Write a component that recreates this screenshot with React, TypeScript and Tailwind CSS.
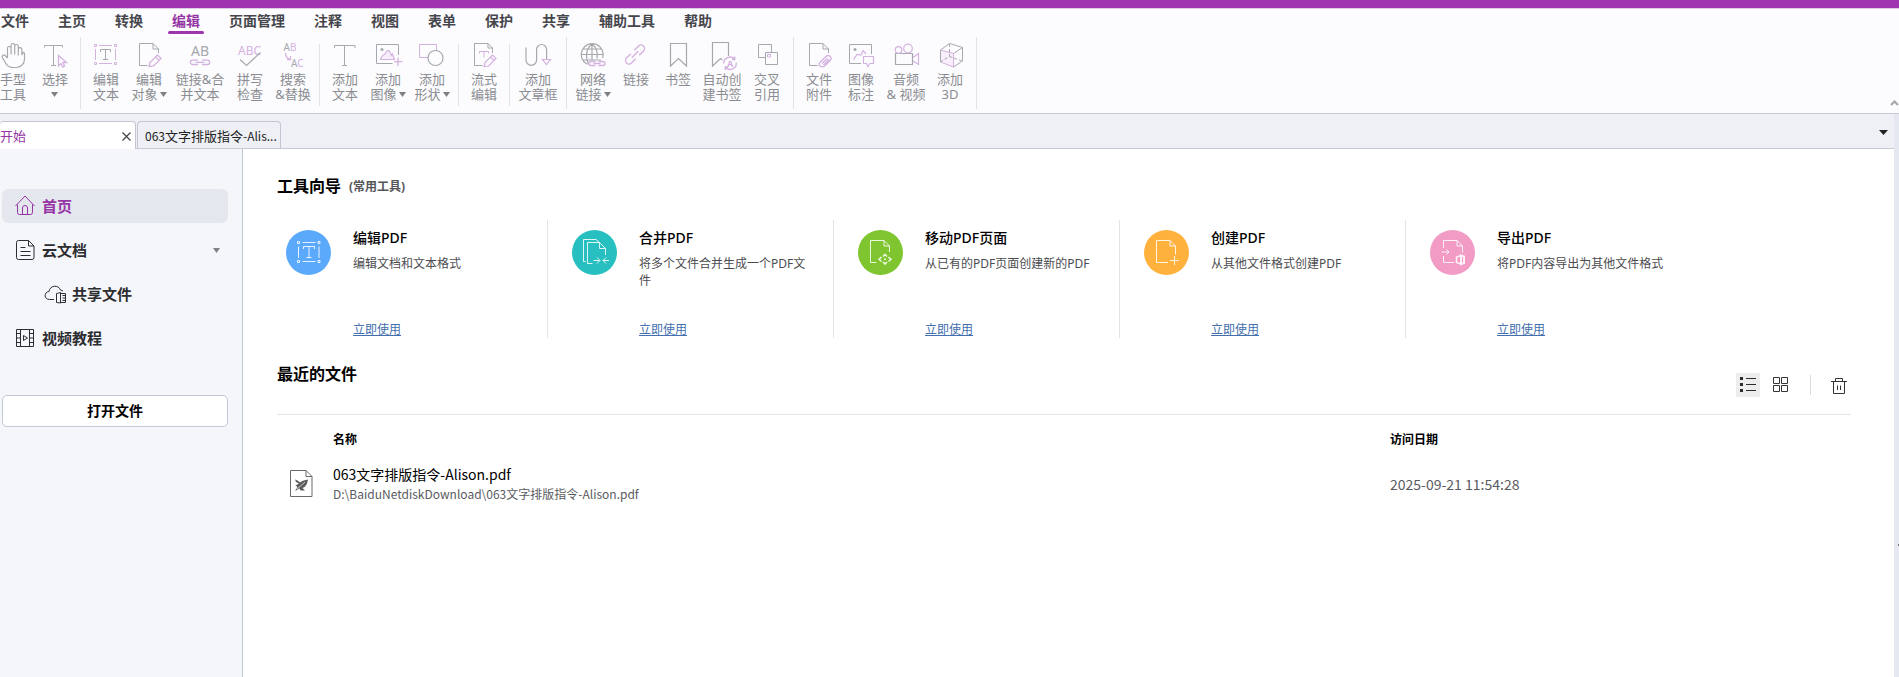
import { useState, type ReactNode } from 'react'

const G = '#a6a8ad'
const P = '#d4b2df'

const MENUS = ['文件', '主页', '转换', '编辑', '页面管理', '注释', '视图', '表单', '保护', '共享', '辅助工具', '帮助']

const PAGE = 'M12.5 24.5H4.500V2.500H18L23.500 8V12'
const PENCIL = 'M14 25.500L15 21.500L22.500 14L26 17.500L18.500 25L14 25.500ZM20.500 16L24 19.500'

function Ico({ children }: { children: ReactNode }) {
  return (
    <svg width="28" height="28" viewBox="0 0 28 28" fill="none" stroke={G} className="shrink-0 overflow-visible" aria-hidden="true">
      {children}
    </svg>
  )
}

const ICONS: Record<string, ReactNode> = {
  hand: (
    <path strokeWidth="1.2" d="M8.500 17V7.300a1.800 1.800 0 0 1 3.600 0V13.500M12.100 13.500V4.300a1.800 1.800 0 0 1 3.600 0V13.500M15.700 13.500V5.300a1.800 1.800 0 0 1 3.600 0V14M19.300 14.500V8.500a1.800 1.800 0 0 1 3.600 0V14L24 11.500a1.300 1.300 0 0 1 1.500 1V18C25.500 23.500 21.500 26.500 17 26.500H13.500C9 26.500 7.500 24 6 21L3.300 16.500C2.500 14.500 4.800 13 6.200 14.500L8.500 17" />
  ),
  select: (
    <>
      <path d="M3.500 6.500V4.500H21.500V6.500M12.500 4.500V24.500M10 24.500H15" />
      <path stroke={P} strokeWidth="1.3" d="M17.500 14.500V25L20 22.500L21.800 26L23.500 25L22 21.500H25.500Z" />
    </>
  ),
  editText: (
    <>
      <path stroke={P} d="M2.500 3.500h2v2h-2zM22.500 3.500h2v2h-2zM2.500 21.500h2v2h-2zM22.500 21.500h2v2h-2zM7 4.500H20M7 22.500H20M3.500 8V19M23.500 8V19" />
      <path d="M8.500 11V8.500H18.500V11M13.500 8.500V18.500M11 18.500H16" />
    </>
  ),
  editObject: (
    <>
      <path d="M12.500 24.500H4.500V2.500H18L23.500 8V12M18 2.500V8H23.500" />
      <path stroke={P} strokeWidth="1.3" d={PENCIL} />
    </>
  ),
  linkText: (
    <>
      <text x="14" y="15" textAnchor="middle" fontSize="14" fill={G} stroke="none">AB</text>
      <path stroke={P} strokeWidth="1.3" d="M12 23.500H6.500a2.200 2.200 0 0 1 0-4.400H12M16 19.100H21.500a2.200 2.200 0 0 1 0 4.400H16M9.500 21.300H18.500" />
    </>
  ),
  spell: (
    <>
      <text x="13.500" y="13.500" textAnchor="middle" fontSize="12" fill={P} stroke="none">ABC</text>
      <path strokeWidth="1.200" d="M4 18.500L10.500 24.500L24.500 11.500" />
    </>
  ),
  replace: (
    <>
      <text x="4.500" y="10" fontSize="10" fill={G} stroke="none">A<tspan fill={P}>B</tspan></text>
      <text x="12" y="25.500" fontSize="10" fill={G} stroke="none">A<tspan fill={P}>C</tspan></text>
      <path stroke={P} strokeWidth="1.200" d="M6.500 12C6.500 15.500 8 17.500 11.500 18.500M11.500 15V18.700H8" />
    </>
  ),
  addText: <path d="M3.500 7V4.500H24V7M13.500 4.500V24.500M11 24.500H16" />,
  addImage: (
    <>
      <path d="M18.500 22.500H2.500V3.500H24.500V14" />
      <circle cx="8" cy="8.500" r="1.500" fill={G} stroke="none" />
      <path stroke={P} fill="#f7eefb" strokeWidth="1.200" d="M6.500 18.500C8 15 9 13.500 10.500 13.500L13.500 9.500H15L17.500 14.500L18.500 13L20.500 18.500Z" />
      <path stroke={P} strokeWidth="1.300" d="M24 16.500V25M20 20.700H28.500" />
    </>
  ),
  addShape: (
    <>
      <path stroke={P} d="M1.500 3.500H18.500V16.500H1.500Z" />
      <circle cx="17.500" cy="17" r="7.500" fill="#fcfcfe" strokeWidth="1.200" />
    </>
  ),
  flow: (
    <>
      <path d="M12.500 24.500H4.500V2.500H18L22.500 7V12M18 2.500V7H22.500" />
      <path stroke={P} d="M9.500 12.500V10.500H18.500V12.500M14 10.500V16.500" />
      <path stroke={P} strokeWidth="1.200" d={PENCIL} />
    </>
  ),
  articleBox: (
    <>
      <path strokeWidth="1.200" d="M2 6.500V19a5.300 5.300 0 0 0 10.600 0V8.500a5 5 0 0 1 10 0V18" />
      <path stroke={P} strokeWidth="1.200" d="M18.500 18.500H26.500L22.500 23.500Z" />
    </>
  ),
  web: (
    <>
      <path strokeWidth="1.200" d="M8 23.300A11 11 0 1 1 23.700 17M13 2.700V19M2 13.500H24M4 8H22M4 19H22M9.500 23.500C6.500 16 7 8 13 2.700C19 8 18.500 13 18 17.500" />
      <path stroke={P} strokeWidth="1.300" fill="#fcfcfe" d="M16.500 24.500H12a2 2 0 0 1 0-4H16.500M19.500 20.500H24a2 2 0 0 1 0 4H19.500M14.500 22.500H21.500" />
    </>
  ),
  link: (
    <g stroke={P} strokeWidth="1.400" transform="rotate(-45 13 13.500)">
      <path d="M10.500 17H4.500a3.500 3.500 0 0 1 0-7H10.500M15.500 10H21.500a3.500 3.500 0 0 1 0 7H15.500M8.500 13.500H17.500" />
    </g>
  ),
  bookmark: <path strokeWidth="1.200" d="M6.500 2.500H22.500V25L14.500 17.500L6.500 25Z" />,
  autoBookmark: (
    <>
      <path strokeWidth="1.200" d="M20.500 15V1.500H4.500V25L12.500 17.500L14.500 19" />
      <path stroke={P} strokeWidth="1.300" d="M26.500 18A6.300 6.300 0 0 0 15.700 22.500M17.500 26.500A6.300 6.300 0 0 0 28.300 21.500M26.700 15.500V18.500H24M17.300 29V26H20" />
      <text x="22" y="25.500" textAnchor="middle" fontSize="9" fontWeight="700" fill={P} stroke="none">A</text>
    </>
  ),
  cross: (
    <>
      <path d="M12 16.500H5.500V3.500H18.500V11M12.500 11.500H24.500V23.500H12.500Z" />
      <path stroke={P} d="M14.500 13.500H17.500V16H14.500Z" />
    </>
  ),
  attach: (
    <>
      <path d={PAGE} />
      <path d="M18 2.500V8H23.500" />
      <path stroke={P} strokeWidth="1.300" d="M14.800 21.500L21 15.500C24 13 27.800 16.500 25 19.500L20 24.700C17.500 27 12 25.500 14.800 21.500M17 22.500L22.500 17.300M18.500 24L24 18.500" />
    </>
  ),
  imageNote: (
    <>
      <path d="M14 22.500H2.500V3.500H24.500V13" />
      <circle cx="8" cy="8.500" r="1.500" fill={G} stroke="none" />
      <path stroke={P} strokeWidth="1.200" d="M6.500 18.500L10 13.500L14 14L16 9.500L19 13M16.500 15.500H26.500V22.500H23L21 25.500L19.500 22.500H16.500Z" />
    </>
  ),
  video: (
    <>
      <path strokeWidth="1.200" d="M3.500 12.500H20.500V23.500H3.500Z" />
      <g stroke={P} strokeWidth="1.200">
        <circle cx="6.500" cy="9" r="3.300" />
        <circle cx="16" cy="7.500" r="4.300" />
        <path d="M21 16.500L26.500 12.500V23.500L21 20" />
      </g>
    </>
  ),
  cube: (
    <>
      <path stroke={P} fill="#f9effc" d="M4.500 9L17.500 12.500V26L4.500 21Z" />
      <path d="M4.500 9L13.500 2.500L26.500 6.500V20L17.500 26M4.500 9V21M17.500 12.500L26.500 6.500" />
      <path strokeDasharray="3 2" d="M13.500 3V15.500L5 20.500M13.500 15.500L26 20" />
    </>
  ),
}

type Tool = { icon: string; lines: string[]; w: string; drop?: boolean }

const GROUPS: { tools: Tool[]; tall: boolean }[] = [
  {
    tall: true,
    tools: [
      { icon: 'hand', lines: ['手型', '工具'], w: 'w-[26px] mr-1' },
      { icon: 'select', lines: ['选择', ''], w: 'w-[50px]', drop: true },
    ],
  },
  {
    tall: false,
    tools: [
      { icon: 'editText', lines: ['编辑', '文本'], w: 'w-[50px]' },
      { icon: 'editObject', lines: ['编辑', '对象'], w: 'w-[36px]', drop: true },
      { icon: 'linkText', lines: ['链接&合', '并文本'], w: 'w-[66px]' },
      { icon: 'spell', lines: ['拼写', '检查'], w: 'w-[34px]' },
      { icon: 'replace', lines: ['搜索', '&替换'], w: 'w-[52px]' },
    ],
  },
  {
    tall: false,
    tools: [
      { icon: 'addText', lines: ['添加', '文本'], w: 'w-[50px]' },
      { icon: 'addImage', lines: ['添加', '图像'], w: 'w-[36px]', drop: true },
      { icon: 'addShape', lines: ['添加', '形状'], w: 'w-[52px]', drop: true },
    ],
  },
  { tall: false, tools: [{ icon: 'flow', lines: ['流式', '编辑'], w: 'w-[50px]' }] },
  { tall: true, tools: [{ icon: 'articleBox', lines: ['添加', '文章框'], w: 'w-[56px]' }] },
  {
    tall: true,
    tools: [
      { icon: 'web', lines: ['网络', '链接'], w: 'w-[52px]', drop: true },
      { icon: 'link', lines: ['链接'], w: 'w-[34px]' },
      { icon: 'bookmark', lines: ['书签'], w: 'w-[50px]' },
      { icon: 'autoBookmark', lines: ['自动创', '建书签'], w: 'w-[38px]' },
      { icon: 'cross', lines: ['交叉', '引用'], w: 'w-[52px]' },
    ],
  },
  {
    tall: true,
    tools: [
      { icon: 'attach', lines: ['文件', '附件'], w: 'w-[50px]' },
      { icon: 'imageNote', lines: ['图像', '标注'], w: 'w-[34px]' },
      { icon: 'video', lines: ['音频', '& 视频'], w: 'w-[56px]' },
      { icon: 'cube', lines: ['添加', '3D'], w: 'w-[32px] mr-[10px]' },
    ],
  },
]

const CARDS = [
  {
    title: '编辑PDF',
    desc: '编辑文档和文本格式',
    bg: 'bg-[#5ba9fb]',
    art: (
      <path d="M11.500 11.500h2v2h-2zM32 11.500h2v2h-2zM11.500 30.500h2v2h-2zM32 30.500h2v2h-2zM16.500 12.500H29.500M16.500 31.500H29.500M12.500 16.500V28M33 16.500V28M17.500 19V16.500H28.500V19M23 16.500V27.500M20.500 27.500H25.500" />
    ),
  },
  {
    title: '合并PDF',
    desc: '将多个文件合并生成一个PDF文件',
    bg: 'bg-[#27bfc0]',
    art: (
      <path d="M13.500 31.500H11.500V9.500H24L27 12M20.500 33.500H15.500V12.500H27.500L33.500 18.500V25M27.500 12.500V18.500H33.500M21.500 30.500H27.500M25 27.500L28 30.500L25 33.500M31 30.500H37M34 27.500L31 30.500L34 33.500" />
    ),
  },
  {
    title: '移动PDF页面',
    desc: '从已有的PDF页面创建新的PDF',
    bg: 'bg-[#7ec52f]',
    art: (
      <>
        <path d="M18.500 32.500H12.500V10.500H26L31.500 16V22M26 10.500V16H31.500" />
        <path strokeWidth="1.600" d="M25 26.500L27 24.500L29 26.500M25 32L27 34L29 32M23.500 27L21 29.300L23.500 31.500M30.500 27L33 29.300L30.500 31.500M26 29.300H28" />
      </>
    ),
  },
  {
    title: '创建PDF',
    desc: '从其他文件格式创建PDF',
    bg: 'bg-[#ffb13e]',
    art: <path d="M24 32.500H12.500V10.500H26L31.500 16V24.500M26 10.500V16H31.500M30.500 26V35M26 30.500H35" />,
  },
  {
    title: '导出PDF',
    desc: '将PDF内容导出为其他文件格式',
    bg: 'bg-[#f19bc5]',
    art: (
      <>
        <path d="M13.500 18V10.500H27L32.500 16V22.500M27 10.500V16H32.500M13.500 26V32.500H24M11.500 22H19M16.500 19.500L19 22L16.500 24.500" />
        <path strokeWidth="1.600" d="M31 25.500L26.500 27V32.500L31 34" />
        <path strokeWidth="2" d="M31 25.500L34 26.500V33L31 34Z" />
      </>
    ),
  },
]

const NAV = [
  {
    label: '首页',
    art: <path d="M2.500 12L12 2L21.500 12M4.500 10.500V18.500a2 2 0 0 0 2 2H17.500a2 2 0 0 0 2-2V10.500M9.500 20.500V14a2.500 2.500 0 0 1 5 0V20.500" />,
  },
  {
    label: '云文档',
    expandable: true,
    art: <path d="M5.500 2.500H15.500L21 8V19.500a2 2 0 0 1-2 2H5.500a2 2 0 0 1-2-2V4.500a2 2 0 0 1 2-2ZM15.500 2.500V8H21M7.500 9.500H12.500M7.500 13.500H17.500M7.500 17.500H17.500" />,
  },
  {
    label: '共享文件',
    nested: true,
    art: <path d="M11 17.500H6.500C0 17 1.500 9.500 6 9.500C7 3 15.500 2.500 17.500 8L20 9M13.500 11.500L17.500 10.500V21L13.500 20.500ZM17.500 11.500H22.500V20.500H17.500M19.500 13.500H22.500M19.500 16H22.500M19.500 18.500H22.500" />,
  },
  {
    label: '视频教程',
    art: <path d="M3.500 3.500H20.500V20.500H3.500ZM7.500 3.500V20.500M16.500 3.500V20.500M3.500 7.500H7.500M3.500 12H7.500M3.500 16.500H7.500M16.500 7.500H20.500M16.500 12H20.500M16.500 16.500H20.500M10.500 9.500V14.500L14.500 12Z" />,
  },
]

function Caret() {
  return (
    <svg width="7" height="5" viewBox="0 0 7 5" fill="#7f8085" aria-hidden="true">
      <path d="M0 0H7L3.500 5Z" />
    </svg>
  )
}

function ToolButton({ tool }: { tool: Tool }) {
  return (
    <button className={`flex shrink-0 flex-col items-center pt-1 text-[13px] leading-[15px] whitespace-nowrap text-[#8b8c91] ${tool.w}`}>
      <Ico>{ICONS[tool.icon]}</Ico>
      <span className="mt-[3px] flex flex-col items-center">
        {tool.lines.map((line, i) => (
          <span key={i} className="flex h-[15px] items-center gap-0.5">
            {line}
            {tool.drop && i === tool.lines.length - 1 && <Caret />}
          </span>
        ))}
      </span>
    </button>
  )
}

export default function App() {
  const [menu, setMenu] = useState('编辑')
  const [nav, setNav] = useState('首页')
  const [view, setView] = useState('list')

  return (
    <div className="flex min-h-screen flex-col overflow-x-hidden bg-white font-['Noto_Sans','Noto_Sans_CJK_SC',sans-serif] text-black">
      <header className="border-b border-[#c8cad3] bg-[#fcfcfe]">
        <div className="h-2 bg-[#a034b0]" />
        <nav className="flex h-[29px] gap-[29px] border-t border-[#dccbe4] pl-px">
          {MENUS.map(m => (
            <button
              key={m}
              onClick={() => setMenu(m)}
              className={`relative h-6 text-sm font-bold whitespace-nowrap ${menu === m ? 'text-[#9535a5]' : 'text-[#45464b]'}`}
            >
              {m}
              {menu === m && <span className="absolute -right-1 -bottom-px -left-1 h-[3px] rounded-full bg-[#9b37ab]" />}
            </button>
          ))}
        </nav>

        {/* Ribbon */}
        <div className="flex h-[76px]">
          {GROUPS.map((g, i) => (
            <div key={i} className="flex">
              {g.tools.map(t => <ToolButton key={t.icon} tool={t} />)}
              <span className={`w-px bg-[#e2e2ea] ${g.tall ? 'h-[72px]' : 'mt-[7px] h-[62px]'}`} />
            </div>
          ))}
          <button aria-label="收起功能区" className="ml-auto self-end pb-1.5">
            <svg width="9" height="8" viewBox="0 0 9 8" fill="none" stroke="#a5a5a8" strokeWidth="2">
              <path d="M1 6L4.500 2.500L8 6" />
            </svg>
          </button>
        </div>
      </header>

      <div className="flex flex-1">
        <div className="flex min-w-0 flex-1 flex-col">
          {/* Document tabs */}
          <div className="flex h-[35px] items-end gap-px border-b border-[#c8cad3] bg-[#eff0f5] text-[13px]">
            <div className="-mb-px flex h-7 w-[136px] items-center justify-between rounded-t border border-b-0 border-l-0 border-[#c3c6d2] bg-white pt-0.5 pr-1">
              <button className="text-[#9535a5]">开始</button>
              <button aria-label="关闭">
                <svg width="9" height="9" viewBox="0 0 9 9" stroke="#444" strokeWidth="1.200">
                  <path d="M.5.5L8.500 8.500M8.500.5L.5 8.500" />
                </svg>
              </button>
            </div>
            <button className="h-[27px] w-36 rounded-t border border-b-0 border-[#c3c6d2] px-[7px] pt-0.5 text-left font-['Noto_Sans_CJK_SC',sans-serif] whitespace-nowrap text-[#222]">
              <span className="text-xs">063</span>文字排版指令<span className="text-xs">-Alis...</span>
            </button>
            <button aria-label="标签列表" className="mr-1.5 mb-[13px] ml-auto">
              <svg width="9" height="5" viewBox="0 0 9 5" fill="#222">
                <path d="M0 0H9L4.500 5Z" />
              </svg>
            </button>
          </div>

          <div className="flex flex-1">
            <aside className="w-[243px] shrink-0 border-r border-[#c3c7d6] bg-[#f5f6fa] pt-10 pr-3.5 pl-0.5">
              <nav className="flex flex-col gap-2.5">
                {NAV.map(n => (
                  <button
                    key={n.label}
                    onClick={() => setNav(n.label)}
                    className={`flex h-[34px] items-center gap-[5px] rounded-md pr-2 text-[15px] font-bold ${n.nested ? 'pl-[41px]' : 'pl-[11px]'} ${
                      nav === n.label ? 'bg-[#e5e7ef] text-[#9535a5]' : 'text-[#2c2d31]'
                    }`}
                  >
                    <svg width="24" height="24" viewBox="0 0 24 24" fill="none" stroke="currentColor" aria-hidden="true">
                      {n.art}
                    </svg>
                    {n.label}
                    {n.expandable && <span className="ml-auto"><Caret /></span>}
                  </button>
                ))}
              </nav>
              <button className="mt-10 h-8 w-full rounded-[5px] border border-[#c3c7d6] bg-white text-sm font-bold">打开文件</button>
            </aside>

            <main className="min-w-0 flex-1 pt-[25px] pr-[43px] pl-[34px]">
              <h2 className="flex items-end gap-2 text-base leading-6 font-bold">
                工具向导 <span className="text-xs leading-[22px] text-[#55565a]">(常用工具)</span>
              </h2>

              <div className="mt-[22px] -ml-[15px] grid max-w-[1430px] grid-cols-5">
                {CARDS.map(c => (
                  <section key={c.title} className="flex h-[118px] gap-[22px] border-r border-[#e3e4e8] pr-5 pl-6 last:border-r-0">
                    <span className={`mt-[10px] flex size-[45px] shrink-0 rounded-full ${c.bg}`}>
                      <svg width="45" height="45" viewBox="0 0 45 45" fill="none" stroke="#fff" strokeOpacity=".85" aria-hidden="true">
                        {c.art}
                      </svg>
                    </span>
                    <div className="flex min-w-0 flex-1 flex-col items-start pt-2">
                      <h3 className="text-sm leading-5 font-medium">{c.title}</h3>
                      <p className="mt-[7px] text-xs leading-[17px] text-[#4c4c50]">{c.desc}</p>
                      <a href="#" className="mt-auto text-xs leading-4 text-[#436fae] underline">立即使用</a>
                    </div>
                  </section>
                ))}
              </div>

              {/* Recent files */}
              <div className="mt-6 flex h-[52px] justify-between">
                <h2 className="text-base leading-6 font-bold">最近的文件</h2>
                <div className="mt-[11px] flex h-6 items-center">
                  <button aria-label="列表视图" onClick={() => setView('list')} className={`flex size-6 items-center justify-center ${view === 'list' ? 'bg-[#ededed]' : ''}`}>
                    <svg width="16" height="16" viewBox="0 0 16 16" fill="#2c2c2c">
                      <path d="M0 0h3v3H0zM0 6h3v3H0zM0 12h3v3H0zM6 1h10v1H6zM6 7h10v1H6zM6 13h10v1H6z" />
                    </svg>
                  </button>
                  <button aria-label="网格视图" onClick={() => setView('grid')} className={`ml-[9px] flex size-6 items-center justify-center ${view === 'grid' ? 'bg-[#ededed]' : ''}`}>
                    <svg width="16" height="16" viewBox="0 0 16 16" fill="none" stroke="#333">
                      <path d="M.5.5h6v6h-6zM8.500.5h6v6h-6zM.5 8.500h6v6h-6zM8.500 8.500h6v6h-6z" />
                    </svg>
                  </button>
                  <span className="ml-[17px] h-5 w-px bg-[#dcdcdc]" />
                  <button aria-label="清空" className="mr-1 ml-5">
                    <svg width="16" height="17" viewBox="0 0 16 17" fill="none" stroke="#333">
                      <path d="M0 4.500H16M4.500 4V1.500H11.500V4M2.500 4.500V16.500H13.500V4.500M6.500 8.500V13M9.500 8.500V13" />
                    </svg>
                  </button>
                </div>
              </div>

              <table className="w-full table-fixed border-t border-[#e6e6e8] text-left font-['Noto_Sans_CJK_SC',sans-serif]">
                <thead>
                  <tr className="h-[49px] text-xs">
                    <th className="w-14" aria-label="类型" />
                    <th className="font-bold">名称</th>
                    <th className="w-[461px] font-bold">访问日期</th>
                  </tr>
                </thead>
                <tbody>
                  <tr className="h-9">
                    <td className="pl-[13px]">
                      <svg width="23" height="27" viewBox="0 0 23 27" fill="none" stroke="#6a6a6c" aria-hidden="true">
                        <path d="M.5.500H16L22 6.500V26.500H.5ZM16 .5V6.500H22" />
                        <path fill="#5c5c5e" stroke="none" d="M5 9.500C8 10.500 9 11.500 10 12.500C12.500 10.500 15 10 18 9.500C17.500 14 15.500 17 12.500 18L15 20.500H10.500L9.500 18.500L5 21L7.500 17L5.500 15.500L9 13.500L6 12Z" />
                        <path stroke="#fff" strokeWidth=".7" d="M7 19L15 12" />
                      </svg>
                    </td>
                    <td>
                      <p className="text-sm leading-5">063文字排版指令-Alison.pdf</p>
                      <p className="text-xs leading-5 text-[#5a5b5f]">D:\BaiduNetdiskDownload\063文字排版指令-Alison.pdf</p>
                    </td>
                    <td className="text-sm text-[#5a5b5f]">2025-09-21 11:54:28</td>
                  </tr>
                </tbody>
              </table>
            </main>
          </div>
        </div>
        <div className="flex w-[5px] items-center justify-end bg-[#e5e8f0]">
          <span className="mt-[299px] h-0.5 w-px bg-[#77787c]" />
        </div>
      </div>
    </div>
  )
}
